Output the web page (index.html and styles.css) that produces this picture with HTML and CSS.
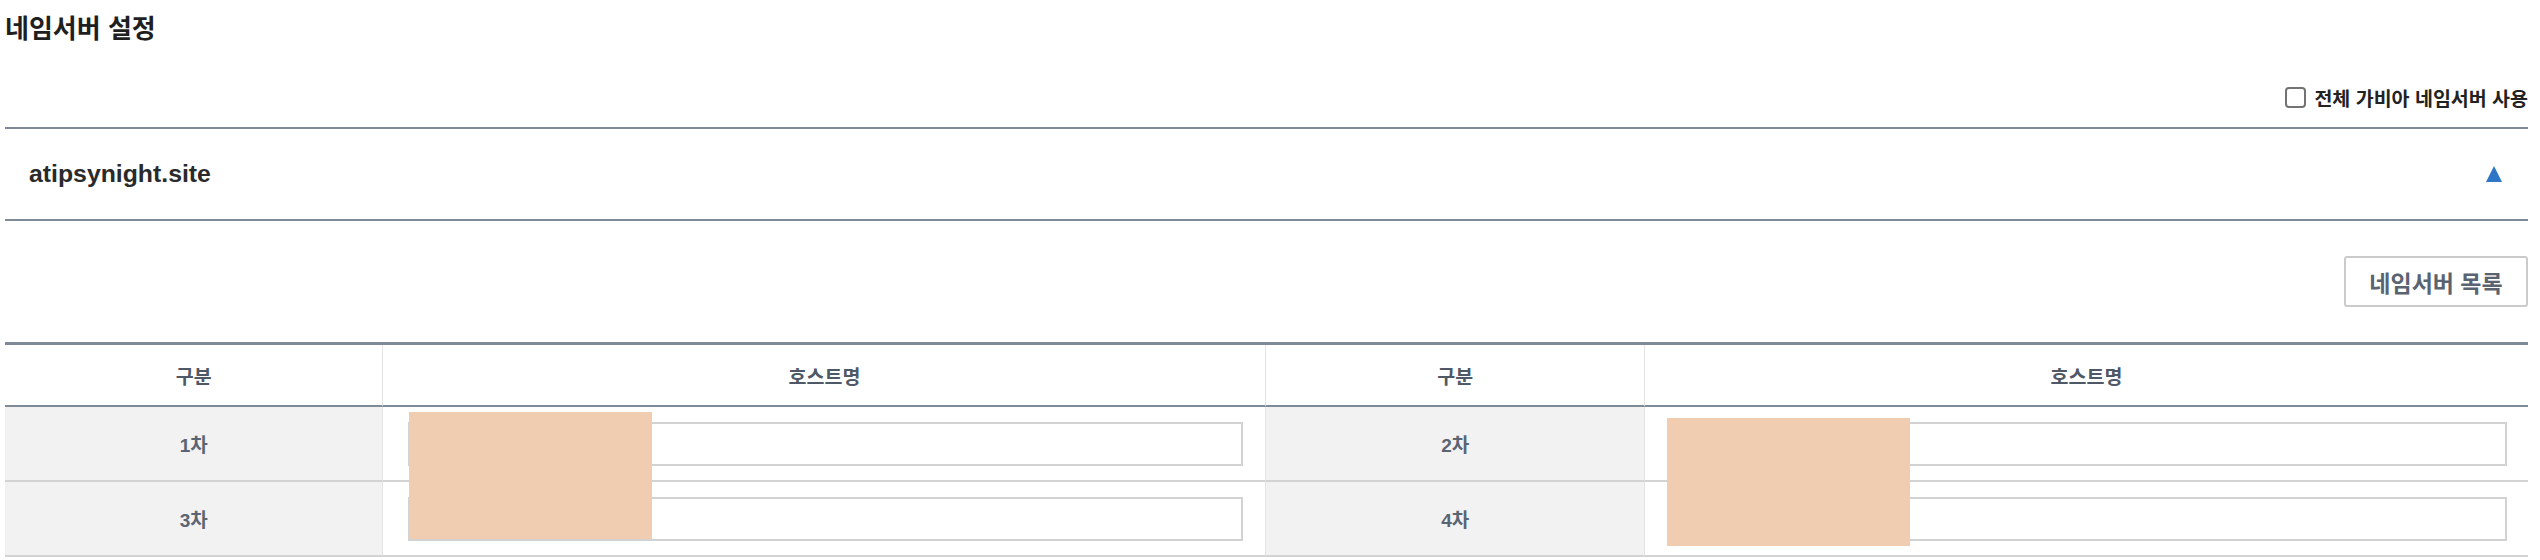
FILE: index.html
```html
<!DOCTYPE html>
<html lang="ko">
<head>
<meta charset="utf-8">
<title>네임서버 설정</title>
<link rel="stylesheet" href="styles.css">
</head>
<body>
<div class="page">
  <h1 class="title">네임서버 설정</h1>
  <div class="toolbar">
    <label class="all-check"><input type="checkbox" class="check">전체 가비아 네임서버 사용</label>
  </div>
  <div class="domain-bar">
    <span class="domain">atipsynight.site</span>
    <span class="toggle" aria-label="접기"></span>
  </div>
  <div class="actions">
    <button class="btn" type="button">네임서버 목록</button>
  </div>
  <table class="ns-table">
    <colgroup>
      <col class="c-label"><col class="c-host"><col class="c-label"><col class="c-host">
    </colgroup>
    <thead>
      <tr><th>구분</th><th>호스트명</th><th>구분</th><th>호스트명</th></tr>
    </thead>
    <tbody>
      <tr>
        <th>1차</th>
        <td class="host"><input class="field" type="text"><span class="mask mask-a"></span></td>
        <th>2차</th>
        <td class="host last"><input class="field" type="text"><span class="mask mask-b"></span></td>
      </tr>
      <tr>
        <th>3차</th>
        <td class="host"><input class="field" type="text"></td>
        <th>4차</th>
        <td class="host last"><input class="field" type="text"></td>
      </tr>
    </tbody>
  </table>
</div>
</body>
</html>
```

FILE: styles.css
```css
* { box-sizing: border-box; }
html, body { margin: 0; padding: 0; background: #fff; }
body {
  font-family: "Liberation Sans", "Noto Sans CJK KR", sans-serif;
  color: #222;
}
.page {
  padding: 0 12px 0 5px;
}
.title {
  margin: 0;
  padding-top: 10px;
  font-size: 26px;
  line-height: 39px;
  font-weight: 700;
  color: #1f1f1f;
}
.toolbar {
  height: 78px;
  padding-top: 19px;
  display: flex;
  justify-content: flex-end;
  align-items: center;
}
.all-check {
  display: flex;
  align-items: center;
  gap: 8px;
  font-size: 19.5px;
  font-weight: 700;
  color: #222;
}
.check {
  appearance: none;
  -webkit-appearance: none;
  margin: 0;
  width: 21px;
  height: 21px;
  border: 2px solid #737373;
  border-radius: 4px;
  background: #fff;
}
.domain-bar {
  height: 94px;
  border-top: 2px solid #7f8a98;
  border-bottom: 2px solid #7f8a98;
  display: flex;
  align-items: center;
  justify-content: space-between;
  padding: 0 26px 0 24px;
}
.domain {
  font-size: 24.8px;
  font-weight: 700;
  color: #2a2a2a;
}
.toggle {
  width: 0;
  height: 0;
  border-left: 8px solid transparent;
  border-right: 8px solid transparent;
  border-bottom: 16px solid #2f76c6;
}
.actions {
  display: flex;
  justify-content: flex-end;
  padding: 35px 0;
}
.btn {
  height: 51px;
  width: 184px;
  margin: 0;
  border: 2px solid #cbcbcb;
  border-radius: 3px;
  background: #fff;
  font-family: "Liberation Sans", "Noto Sans CJK KR", sans-serif;
  font-size: 23px;
  font-weight: 700;
  color: #5a6370;
}
.ns-table {
  width: 100%;
  table-layout: fixed;
  border-collapse: separate;
  border-spacing: 0;
  border-top: 3px solid #7f8a98;
}
.c-label { width: 15%; }
.c-host { width: 35%; }
.ns-table th,
.ns-table td {
  padding: 0;
  text-align: center;
  border-right: 1px solid #e4e4e4;
}
.ns-table th:last-child,
.ns-table td:last-child { border-right: 0; }
.ns-table thead th {
  height: 62px;
  border-bottom: 2px solid #7f8a98;
  font-size: 19.5px;
  font-weight: 700;
  color: #4f5866;
  background: #fff;
}
.ns-table tbody th,
.ns-table tbody td {
  height: 75px;
  border-bottom: 2px solid #d3d3d3;
}
.ns-table tbody th {
  background: #f2f2f2;
  font-size: 19px;
  font-weight: 700;
  color: #5a6472;
}
.host {
  position: relative;
  padding: 0 22px 0 25px !important;
}
.host.last { padding: 0 21px 0 23px !important; }
.field {
  display: block;
  width: 100%;
  height: 44px;
  margin: 0;
  border: 2px solid #d2d2d2;
  background: #fff;
  font-size: 16px;
}
.mask {
  position: absolute;
  z-index: 2;
  width: 243px;
  background: #f0cdb0;
}
.mask-a { left: 26px; top: 5px; height: 127px; }
.mask-b { left: 22px; top: 11px; height: 128px; }
```
